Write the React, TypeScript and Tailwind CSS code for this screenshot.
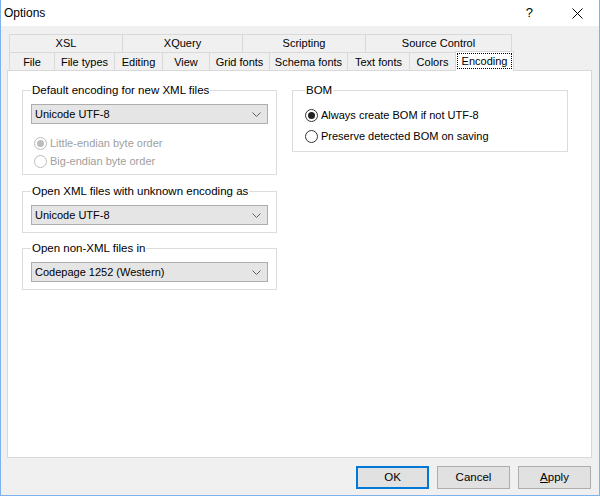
const row1 = [
  { label: 'XSL', w: 'w-[113px]' },
  { label: 'XQuery', w: 'w-[120px]' },
  { label: 'Scripting', w: 'w-[123px]' },
  { label: 'Source Control', w: 'w-[147px]' },
];

const row2 = [
  { label: 'File', w: 'w-[45px]' },
  { label: 'File types', w: 'w-[60px]' },
  { label: 'Editing', w: 'w-[48px]' },
  { label: 'View', w: 'w-[47px]' },
  { label: 'Grid fonts', w: 'w-[60px]' },
  { label: 'Schema fonts', w: 'w-[78px]' },
  { label: 'Text fonts', w: 'w-[62px]' },
  { label: 'Colors', w: 'w-[46px]' },
];

function Select({ value }: { value: string }) {
  return (
    <div className="h-[20px] w-[237px] flex items-center justify-between bg-[#e5e5e5] border border-[#adadad] pl-[3px] pr-[6px]">
      <span>{value}</span>
      <svg width="9" height="5" viewBox="0 0 9 5" className="mt-[1px]">
        <path d="M0.5 0.5 L4.5 4.5 L8.5 0.5" fill="none" stroke="#606060" strokeWidth="1" />
      </svg>
    </div>
  );
}

function Radio({ label, checked, disabled }: { label: string; checked?: boolean; disabled?: boolean }) {
  return (
    <div className={`h-[18px] flex items-center ${disabled ? 'text-[#a0a0a0]' : 'text-black'}`}>
      <span
        className={`w-[13px] h-[13px] rounded-full border flex items-center justify-center bg-white ${
          disabled ? 'border-[#bcbcbc]' : 'border-[#333333]'
        }`}
      >
        {checked && <span className={`w-[7px] h-[7px] rounded-full ${disabled ? 'bg-[#bcbcbc]' : 'bg-[#222222]'}`} />}
      </span>
      <span className="ml-[3px]">{label}</span>
    </div>
  );
}

function Group({ title, className, children }: { title: string; className?: string; children: React.ReactNode }) {
  return (
    <fieldset className={`border border-[#dcdcdc] px-[8px] pt-[7px] ${className ?? ''}`}>
      <legend className="px-[1px] leading-[14px] text-[11.5px]">{title}</legend>
      {children}
    </fieldset>
  );
}

export default function App() {
  return (
    <div
      className="w-[600px] h-[496px] flex flex-col bg-[#f0f0f0] border-x border-b border-[#7db3ea] text-[11px] text-black"
      style={{ fontFamily: '"Liberation Sans", Arial, sans-serif' }}
    >
      {/* title bar */}
      <div className="h-[26px] bg-white flex items-center shrink-0">
        <span className="ml-[3px] text-[12px]">Options</span>
        <span className="ml-auto mr-[39px] text-[13px]">?</span>
        <svg width="11" height="11" viewBox="0 0 11 11" className="mr-[16px]">
          <path d="M0.5 0.5 L10.5 10.5 M10.5 0.5 L0.5 10.5" stroke="#000" strokeWidth="1" />
        </svg>
      </div>

      <div className="flex-1 flex flex-col px-[6px] pt-[8px]">
        {/* tabs */}
        <div className="ml-[2px] flex flex-col">
          <div className="flex h-[18px]">
            {row1.map((t) => (
              <div
                key={t.label}
                className={`${t.w} flex items-center justify-center border-t border-l border-[#d9d9d9] last:border-r`}
              >
                {t.label}
              </div>
            ))}
          </div>
          <div className="flex h-[18px] items-start">
            {row2.map((t) => (
              <div
                key={t.label}
                className={`${t.w} h-[18px] flex items-center justify-center border-t border-l border-[#d9d9d9] pt-[1px]`}
              >
                {t.label}
              </div>
            ))}
            <div className="relative z-10 -mt-[1px] w-[59px] h-[20px] bg-white border-t border-x border-[#d9d9d9] px-[1px] pt-[1px]">
              <div className="h-[16px] border border-dotted border-black flex items-center justify-center">
                Encoding
              </div>
            </div>
          </div>
        </div>

        {/* panel */}
        <div className="w-[585px] h-[388px] bg-white border border-[#d9d9d9] flex gap-[15px] pl-[14px] pt-[12px]">
          <div className="w-[255px] flex flex-col">
            <Group title="Default encoding for new XML files" className="pb-[4px]">
              <Select value="Unicode UTF-8" />
              <div className="mt-[10px] ml-[3px]">
                <Radio label="Little-endian byte order" checked disabled />
                <Radio label="Big-endian byte order" disabled />
              </div>
            </Group>
            <Group title="Open XML files with unknown encoding as" className="mt-[9px] pb-[7px]">
              <Select value="Unicode UTF-8" />
            </Group>
            <Group title="Open non-XML files in" className="mt-[8px] pb-[7px]">
              <Select value="Codepage 1252 (Western)" />
            </Group>
          </div>
          <div className="w-[276px]">
            <Group title="BOM" className="pl-[12px] pb-[5px]">
              <div className="pt-[1px]">
                <div className="h-[21px] flex items-center">
                  <Radio label="Always create BOM if not UTF-8" checked />
                </div>
                <div className="h-[20px] flex items-center">
                  <Radio label="Preserve detected BOM on saving" />
                </div>
              </div>
            </Group>
          </div>
        </div>

        {/* buttons */}
        <div className="mt-[8px] mr-[2px] flex justify-end gap-[8px] text-[11.5px]">
          <button className="w-[73px] h-[23px] bg-[#e1e1e1] border-2 border-[#0078d7]">OK</button>
          <button className="w-[73px] h-[23px] bg-[#e1e1e1] border border-[#adadad]">Cancel</button>
          <button className="w-[73px] h-[23px] bg-[#e1e1e1] border border-[#adadad]">
            <span className="underline">A</span>pply
          </button>
        </div>
      </div>
    </div>
  );
}
